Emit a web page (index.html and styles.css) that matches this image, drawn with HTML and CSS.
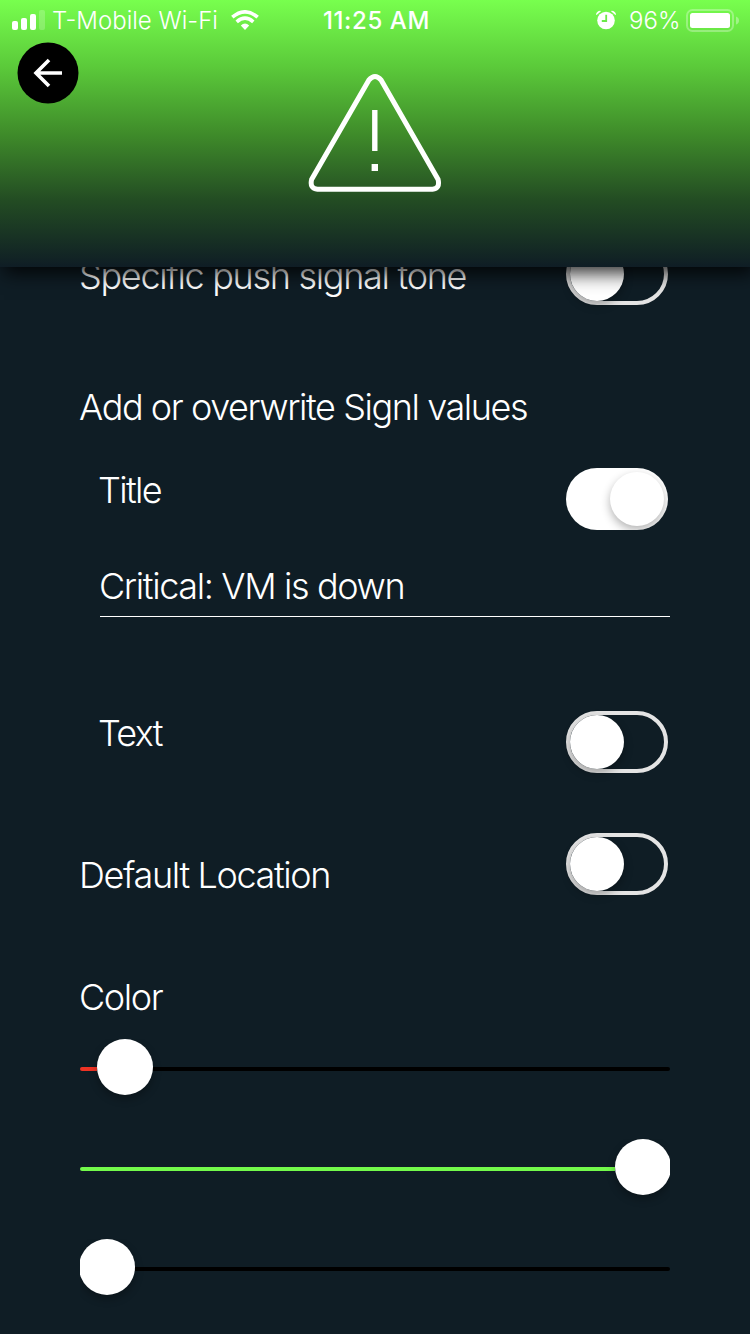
FILE: index.html
```html
<!DOCTYPE html>
<html lang="en">
<head>
<meta charset="utf-8">
<title>Signl settings</title>
<link rel="stylesheet" href="styles.css">
</head>
<body>
<div class="screen">
  <header class="header">
    <div class="status">
      <div class="status-left">
        <svg class="signal" width="33" height="20" viewBox="0 0 33 20" fill="#fff"><rect x="0" y="11" width="6" height="9" rx="2"/><rect x="9" y="8" width="6" height="12" rx="2"/><rect x="18" y="4" width="6" height="16" rx="2"/><rect x="27" y="0" width="6" height="20" rx="2" opacity=".2"/></svg>
        <span class="carrier">T-Mobile Wi-Fi</span>
        <svg class="wifi" width="28" height="20" viewBox="0 0 28 20" fill="none" stroke="#fff" stroke-width="3.6"><path d="M1.3 7.2Q14-3.5 26.7 7.2"/><path d="M5.7 11.8Q14 4.5 22.3 11.8"/><path d="M9.8 15.6Q14 11.6 18.2 15.6L14 19.9Z" fill="#fff" stroke="none"/></svg>
      </div>
      <span class="time">11:25 AM</span>
      <div class="status-right">
        <svg class="alarm" width="20" height="20" viewBox="0 0 20 20"><circle cx="10" cy="10.5" r="8.8" fill="#fff"/><path d="M0 4.6Q.4 1 4.4.7L5 1.2L.6 5ZM20 4.6Q19.6 1 15.6.7L15 1.2L19.4 5Z" fill="#fff"/><path d="M10.2 4.8V11H5.8" fill="none" stroke="#6cea48" stroke-width="1.8"/></svg>
        <span class="percent">96%</span>
        <svg class="battery" width="54" height="24" viewBox="0 0 54 24"><rect x="1" y="1" width="46" height="21" rx="5.5" fill="none" stroke="#fff" stroke-opacity=".3" stroke-width="2"/><rect x="4" y="4" width="40" height="15" rx="2.5" fill="#fff"/><path d="M50 7.5Q53 8.5 53 11.5T50 15.5Z" fill="#fff" opacity=".35"/></svg>
      </div>
    </div>
    <div class="back">
      <svg width="62" height="62" viewBox="0 0 62 62"><circle cx="31" cy="31" r="30.5" fill="#000"/><path d="M45 31H18.5M32 18L19 31L32 44" fill="none" stroke="#fff" stroke-width="3.6"/></svg>
    </div>
    <svg class="warning" width="134" height="120" viewBox="0 0 134 120" fill="none" stroke="#fff" stroke-width="5"><path d="M60.8 7.2Q67-.2 73.2 7.2L130.1 106.5Q132.2 115.5 124.5 116.2H9.5Q1.5 115.5 3.6 106.5Z"/><path d="M66.8 37V78" stroke-width="5.4"/><path d="M66.8 91V98" stroke-width="6.4"/></svg>
  </header>
  <main class="content">
    <section class="row row-tone"><span class="label tone">Specific push signal tone</span><span class="toggle"><i class="knob"></i></span></section>
    <section class="row row-heading"><span class="label heading">Add or overwrite Signl values</span></section>
    <section class="row row-title"><span class="label title">Title</span><span class="toggle on"><i class="knob"></i></span></section>
    <section class="field"><span class="label value">Critical: VM is down</span></section>
    <section class="row row-text"><span class="label text">Text</span><span class="toggle"><i class="knob"></i></span></section>
    <section class="row row-location"><span class="label location">Default Location</span><span class="toggle"><i class="knob"></i></span></section>
    <section class="row row-color"><span class="label color">Color</span></section>
    <div class="slider red"><i class="fill"></i><i class="thumb"></i><i class="track"></i></div>
    <div class="slider green"><i class="fill"></i><i class="thumb"></i></div>
    <div class="slider blue"><i class="thumb"></i><i class="track"></i></div>
  </main>
</div>
</body>
</html>
```
FILE: styles.css
```css
* { box-sizing: border-box; }
body { margin: 0; background: #0f1d25; color: #fff; font-family: Inter, "Liberation Sans", sans-serif; }
.screen { height: 1334px; overflow: hidden; background: #0f1d25; }
svg { display: block; flex: none; }
.header { position: relative; z-index: 1; height: 267px; background: linear-gradient(#78ff4e, #5bca3a 25%, #3f8c2a 50%, #234c23 75%, #0f1d25); box-shadow: 4px 6px 18px rgba(0, 0, 0, .85); }
.status { display: grid; grid-template-columns: 1fr 106px 1fr; height: 42px; padding: 0 10px 0 12px; white-space: nowrap; font-size: 24px; line-height: 42px; }
.status-left, .status-right { display: flex; }
.status-right { justify-content: flex-end; }
.signal { margin-top: 10px; }
.carrier { width: 166px; margin-left: 7px; font-weight: 300; letter-spacing: 0; }
.wifi { margin: 10px 0 0 13px; }
.time { font-weight: 500; letter-spacing: .6px; }
.alarm { margin-top: 10px; }
.percent { width: 51px; margin-left: 13px; font-weight: 300; }
.battery { margin: 9px 0 0 6px; }
.back { padding-left: 17px; height: 31px; }
.warning { margin: 0 auto; }
.content { margin-top: -24px; padding: 0 80px; }
.row { display: flex; justify-content: space-between; padding-right: 2px; }
.label { margin-left: -1px; font-size: 36px; line-height: 45px; font-weight: 300; letter-spacing: -1.37px; white-space: nowrap; }
.row-tone { height: 142px; }
.tone { padding-top: 11px; letter-spacing: -1.3px; }
.row-heading { height: 83px; }
.heading { letter-spacing: -1.43px; }
.title, .text { margin-left: -2px; letter-spacing: -1.7px; }
.row-title { height: 96px; padding-left: 20px; }
.field { height: 53px; margin: 0 0 94px 20px; border-bottom: 1px solid #fff; }
.row-text { height: 122px; padding-left: 20px; }
.row-location { height: 142px; }
.location { padding-top: 20px; }
.row-color { height: 64px; }
.toggle { display: flex; flex: none; width: 102px; height: 62px; border: 4px solid #e4e4e4; border-radius: 31px; }
.knob { flex: none; width: 54px; height: 54px; border-radius: 50%; background: #fff; box-shadow: 0 4px 10px rgba(0, 0, 0, .3); }
.toggle.on { justify-content: flex-end; border: 0; padding: 4px; background: #fff; overflow: hidden; }
.slider { display: flex; align-items: center; width: 590px; height: 100px; padding-bottom: 44px; clip-path: inset(0); }
.thumb { flex: none; width: 56px; height: 56px; border-radius: 50%; background: #fff; box-shadow: 0 4px 8px rgba(0, 0, 0, .3); }
.fill, .track { height: 4px; margin-top: 4px; border-radius: 0 2px 2px 0; }
.track { flex: 1; background: #000; }
.fill { border-radius: 2px 0 0 2px; background: #73fa4b; }
.red .fill { width: 17px; background: #ee3324; }
.green .fill { flex: none; width: 535px; }
.blue .thumb { margin-left: -1px; }
```
